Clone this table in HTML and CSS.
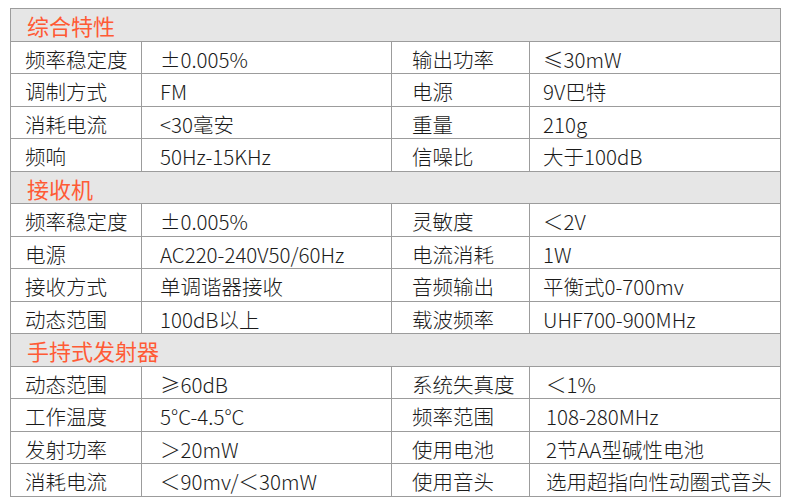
FILE: index.html
```html
<!DOCTYPE html>
<html lang="zh-CN">
<head>
<meta charset="utf-8">
<link rel="stylesheet" href="styles.css">
</head>
<body>
<table class="spec">
  <colgroup>
    <col class="c1"><col class="c2"><col class="c3"><col class="c4">
  </colgroup>
  <tr class="sec"><td colspan="4">综合特性</td></tr>
  <tr><td class="k">频率稳定度</td><td class="v">±0.005%</td><td class="k2">输出功率</td><td class="v2">≤30mW</td></tr>
  <tr><td class="k">调制方式</td><td class="v">FM</td><td class="k2">电源</td><td class="v2">9V巴特</td></tr>
  <tr><td class="k">消耗电流</td><td class="v">&lt;30毫安</td><td class="k2">重量</td><td class="v2">210g</td></tr>
  <tr><td class="k">频响</td><td class="v">50Hz-15KHz</td><td class="k2">信噪比</td><td class="v2">大于100dB</td></tr>
  <tr class="sec"><td colspan="4">接收机</td></tr>
  <tr><td class="k">频率稳定度</td><td class="v">±0.005%</td><td class="k2">灵敏度</td><td class="v2">＜2V</td></tr>
  <tr><td class="k">电源</td><td class="v">AC220-240V50/60Hz</td><td class="k2">电流消耗</td><td class="v2">1W</td></tr>
  <tr><td class="k">接收方式</td><td class="v">单调谐器接收</td><td class="k2">音频输出</td><td class="v2">平衡式0-700mv</td></tr>
  <tr><td class="k">动态范围</td><td class="v">100dB以上</td><td class="k2">载波频率</td><td class="v2">UHF700-900MHz</td></tr>
  <tr class="sec"><td colspan="4">手持式发射器</td></tr>
  <tr><td class="k">动态范围</td><td class="v">≥60dB</td><td class="k2">系统失真度</td><td class="v2 low">＜1%</td></tr>
  <tr><td class="k">工作温度</td><td class="v">5°C-4.5°C</td><td class="k2">频率范围</td><td class="v2 low">108-280MHz</td></tr>
  <tr><td class="k">发射功率</td><td class="v">＞20mW</td><td class="k2">使用电池</td><td class="v2 low">2节AA型碱性电池</td></tr>
  <tr><td class="k">消耗电流</td><td class="v">＜90mv/＜30mW</td><td class="k2">使用音头</td><td class="v2 low">选用超指向性动圈式音头</td></tr>
</table>
</body>
</html>
```
FILE: styles.css
```css
html, body {
  margin: 0;
  padding: 0;
  background: #ffffff;
}
body {
  padding: 8px 0 0 10px;
  font-family: "Noto Sans CJK SC", "Noto Sans", sans-serif;
  color: #1a1a1a;
}
.spec {
  border-collapse: collapse;
  table-layout: fixed;
  width: 770px;
  font-size: 20.5px;
  font-weight: 300;
}
.c1 { width: 131px; }
.c2 { width: 250px; }
.c3 { width: 138px; }
.c4 { width: 251px; }
.spec tr {
  height: 32.5px;
}
.spec td {
  border: 1px solid #9c9c9c;
  padding: 7px 0 0 0;
  line-height: 20px;
  white-space: nowrap;
  overflow: hidden;
  vertical-align: top;
}
.spec .sec td {
  background: #e6e6e6;
  color: #ff5a35;
  font-size: 22px;
  font-weight: 400;
  line-height: 22px;
  padding-left: 16px;
  padding-top: 5px;
}
.k { padding-left: 14px !important; }
.v { padding-left: 18px !important; }
.k2 { padding-left: 20px !important; }
.v2 { padding-left: 13px !important; }
.v2.low { padding-left: 16px !important; }
```
